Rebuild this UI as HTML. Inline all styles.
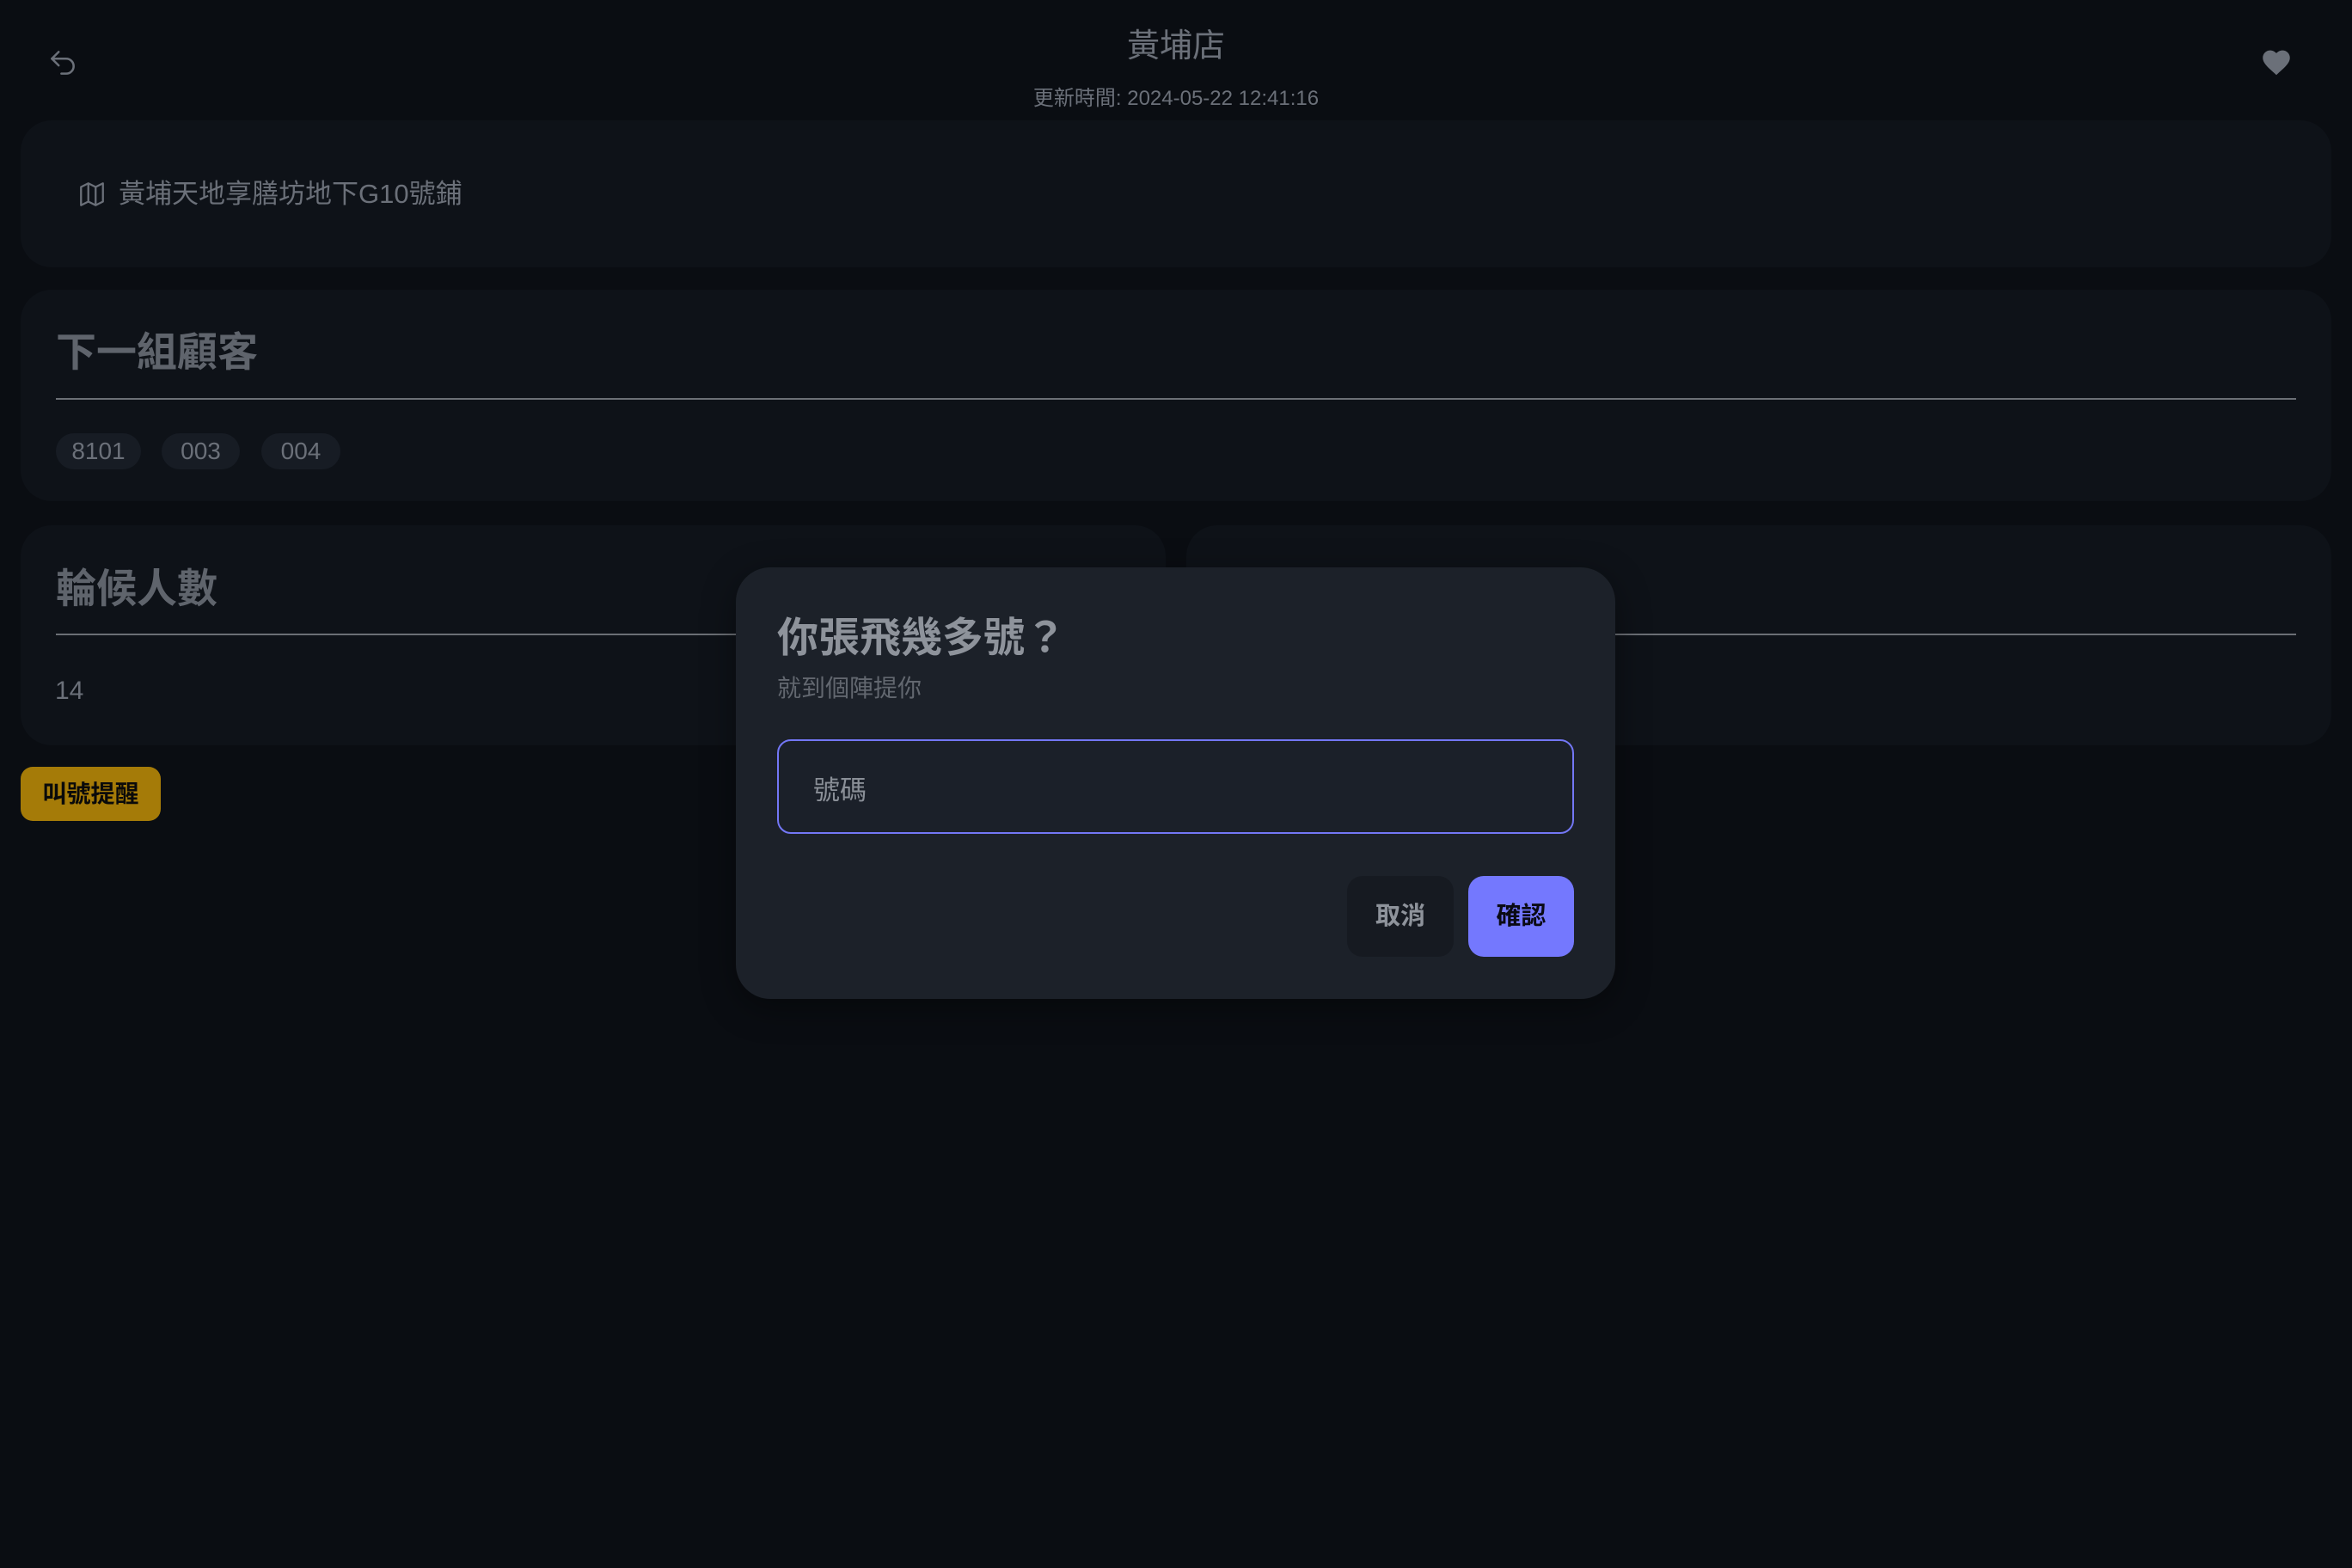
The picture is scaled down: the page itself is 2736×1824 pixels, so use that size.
<!DOCTYPE html>
<html><head><meta charset="utf-8">
<style>
*{margin:0;padding:0;box-sizing:border-box}
html,body{width:2736px;height:1824px;background:#0a0d12;overflow:hidden;font-family:"Liberation Sans","Noto Sans CJK TC",sans-serif;color:#6b7079}
.abs{position:absolute}
.card{position:absolute;background:#0e1218;border-radius:36px}
.h{font-size:47px;font-weight:700;color:#5f646c;position:absolute;left:41px}
.line{position:absolute;height:2px;background:#6b6f75}
.pill{position:absolute;top:504px;height:42px;border-radius:21px;background:#171c24;color:#6b7079;font-size:28px;line-height:42px;text-align:center}
</style></head><body>
<svg class="abs" style="left:54px;top:54px" width="38" height="38" viewBox="0 0 24 24" fill="none" stroke="#6b7079" stroke-width="1.6" stroke-linecap="round" stroke-linejoin="round"><path d="M9 14 4 9l5-5"/><path d="M4 9h10.5a5.5 5.5 0 0 1 0 11H11"/></svg>
<div class="abs" style="left:0;width:2736px;top:22px;text-align:center;font-size:38px;color:#6b7079">黃埔店</div>
<div class="abs" style="left:0;width:2736px;top:94px;text-align:center;font-size:24px;color:#6b7079">更新時間: 2024-05-22 12:41:16</div>
<svg class="abs" style="left:2630px;top:55px" width="36" height="33" viewBox="0 0 24 22"><path d="M12 21.5 10.5 20.1C5.1 15.3 1.5 12.1 1.5 8.1 1.5 4.9 4 2.4 7.2 2.4c1.8 0 3.6.9 4.8 2.2 1.2-1.3 3-2.2 4.8-2.2 3.2 0 5.7 2.5 5.7 5.7 0 4-3.6 7.2-9 12L12 21.5z" fill="#6b7079"/></svg>

<div class="card" style="left:24px;top:140px;width:2688px;height:171px"></div>
<svg class="abs" style="left:90px;top:209px" width="34" height="34" viewBox="0 0 24 24" fill="none" stroke="#6b7079" stroke-width="1.6" stroke-linejoin="round"><path d="M3 6l6-3 6 3 6-3v15l-6 3-6-3-6 3z"/><path d="M9 3v15M15 6v15"/></svg>
<div class="abs" style="left:138px;top:200px;font-size:31px;color:#6b7079">黃埔天地享膳坊地下G10號鋪</div>

<div class="card" style="left:24px;top:337px;width:2688px;height:246px">
<div class="h" style="top:34px">下一組顧客</div>
<div class="line" style="left:41px;top:126px;width:2606px"></div>
</div>
<div class="pill" style="left:65px;width:99px">8101</div>
<div class="pill" style="left:188px;width:91px">003</div>
<div class="pill" style="left:304px;width:92px">004</div>

<div class="card" style="left:24px;top:611px;width:1332px;height:256px">
<div class="h" style="top:35px">輪候人數</div>
<div class="line" style="left:41px;top:126px;width:1291px"></div>
<div class="abs" style="left:40px;top:176px;font-size:30px;color:#6b7079">14</div>
</div>
<div class="card" style="left:1380px;top:611px;width:1332px;height:256px">
<div class="line" style="left:0;top:126px;width:1291px"></div>
</div>

<div class="abs" style="left:24px;top:892px;width:163px;height:63px;border-radius:14px;background:#a57b08;color:#0a0a0a;font-size:28px;font-weight:700;line-height:63px;text-align:center">叫號提醒</div>

<div class="abs" style="left:856px;top:660px;width:1023px;height:502px;border-radius:40px;background:#1c2129;box-shadow:0 10px 40px rgba(0,0,0,.4)">
<div class="abs" style="left:48px;top:42px;font-size:48px;font-weight:700;color:#8e939b">你張飛幾多號？</div>
<div class="abs" style="left:48px;top:119px;font-size:28px;color:#62676f">就到個陣提你</div>
<div class="abs" style="left:48px;top:200px;width:927px;height:110px;border:2px solid #7377f5;border-radius:16px;background:#1b2029"></div>
<div class="abs" style="left:90px;top:234px;font-size:31px;color:#8a8f97">號碼</div>
<div class="abs" style="left:711px;top:359px;width:124px;height:94px;border-radius:18px;background:#161a21;color:#8e939b;font-size:29px;font-weight:700;line-height:94px;text-align:center">取消</div>
<div class="abs" style="left:852px;top:359px;width:123px;height:94px;border-radius:18px;background:#7478fe;color:#0a0a14;font-size:29px;font-weight:700;line-height:94px;text-align:center">確認</div>
</div>
</body></html>
